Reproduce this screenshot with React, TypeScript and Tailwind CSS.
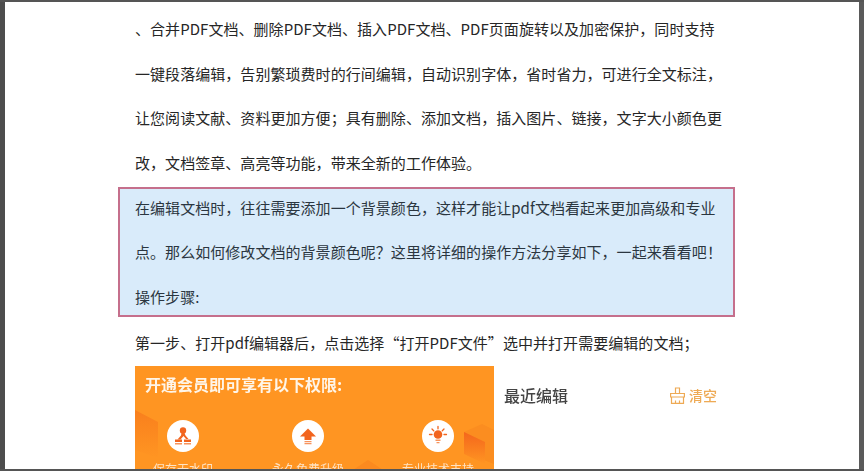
const cjk = { fontFamily: '"Noto Sans CJK SC", "Noto Sans", sans-serif' }

const paragraphOne = [
  '、合并PDF文档、删除PDF文档、插入PDF文档、PDF页面旋转以及加密保护，同时支持',
  '一键段落编辑，告别繁琐费时的行间编辑，自动识别字体，省时省力，可进行全文标注，',
  '让您阅读文献、资料更加方便；具有删除、添加文档，插入图片、链接，文字大小颜色更',
  '改，文档签章、高亮等功能，带来全新的工作体验。',
]

const selected = [
  '在编辑文档时，往往需要添加一个背景颜色，这样才能让pdf文档看起来更加高级和专业',
  '点。那么如何修改文档的背景颜色呢？这里将详细的操作方法分享如下，一起来看看吧！',
  '操作步骤:',
]

function Line({ text }: { text: string }) {
  return <p className="h-[44.7px] whitespace-nowrap leading-[44.7px] tracking-[0.05px]">{text}</p>
}

function StampIcon() {
  return (
    <svg viewBox="0 0 32 32" className="h-8 w-8">
      <circle cx="16" cy="16" r="16" fill="#fff" />
      <circle cx="16" cy="10.500" r="3.200" fill="#f2641e" />
      <path d="M14.500 13h3l1 2.500 3 3.500h-2.500l-2.500-3-3 3.500h-3l3.500-4z" fill="#f2641e" />
      <path d="M8 19.500h7v2.500H8zM17 19.500h7v2.500h-7z" fill="#f2641e" />
      <path d="M8 23h7v1.500H8zM17 23h7v1.500h-7z" fill="#f8935c" />
    </svg>
  )
}

function ArrowIcon() {
  return (
    <svg viewBox="0 0 32 32" className="h-8 w-8">
      <circle cx="16" cy="16" r="16" fill="#fff" />
      <path d="M16 8.500l8 8h-4.500v3.500h-7v-3.500H8z" fill="#f2641e" />
      <path d="M12.500 21h7v1.300h-7zM12.500 23h7v1.300h-7z" fill="#f8935c" />
    </svg>
  )
}

function BulbIcon() {
  return (
    <svg viewBox="0 0 32 32" className="h-8 w-8">
      <circle cx="16" cy="16" r="16" fill="#fff" />
      <circle cx="16" cy="14.500" r="4.300" fill="#f2641e" />
      <path d="M13.500 19.500h5v1.500h-5zM14.500 22h3v1.300h-3z" fill="#f8935c" />
      <path
        d="M16 6.500v2.300M10 9l1.700 1.700M22 9l-1.700 1.700M7.500 14.500h2.500M22 14.500h2.500"
        stroke="#f2641e"
        strokeWidth="1.300"
        strokeLinecap="round"
      />
    </svg>
  )
}

function BroomIcon() {
  return (
    <svg viewBox="0 0 15 17" className="h-[17px] w-[15px]" fill="none" stroke="#eeaa55" strokeWidth="1.200">
      <path d="M5.500 6.500V1h4v5.500" />
      <path d="M0.600 6.500h13.800v3.500H0.600z" />
      <path d="M1.500 10v6.400h12V10" />
      <path d="M5.500 16.400v-3M9.500 16.400v-3" />
    </svg>
  )
}

function Perk({ icon, label, className }: { icon: React.ReactNode; label: string; className?: string }) {
  return (
    <div className={`flex w-[90px] flex-col items-center gap-[8px] ${className ?? ''}`}>
      {icon}
      <span className="whitespace-nowrap text-[12px] leading-[18px] text-[#ffe3c4]">{label}</span>
    </div>
  )
}

function Banner() {
  return (
    <div className="relative h-[140px] w-[359px] shrink-0 bg-[#ff9522] blur-[0.5px]">
      <svg viewBox="0 0 359 140" className="absolute inset-0 h-full w-full">
        <defs>
          <linearGradient id="fadeLeft" x1="0" y1="0" x2="0" y2="1">
            <stop offset="0" stopColor="#f97f1d" />
            <stop offset="1" stopColor="#ff9522" />
          </linearGradient>
          <linearGradient id="fadeRight" x1="0" y1="0" x2="0" y2="1">
            <stop offset="0" stopColor="#f4661c" />
            <stop offset="1" stopColor="#ff9522" />
          </linearGradient>
        </defs>
        <path d="M0 44l23 12v36L0 84z" fill="url(#fadeLeft)" />
        <path d="M329 66l18-8 12 6v34l-10-4z" fill="#fb8d20" />
        <path d="M329 66l21 10v22l-21-10z" fill="url(#fadeRight)" />
        <path d="M218 104l15-10 15 10z" fill="#fb8a1f" />
      </svg>
      <div className="relative flex flex-col">
        <p className="px-[10px] pt-[8px] text-[16px] font-bold leading-[20px] text-[#fff5e8]">
          开通会员即可享有以下权限:
        </p>
        <div className="mt-[26px] flex pl-[3px]">
          <Perk icon={<StampIcon />} label="保存无水印" />
          <Perk icon={<ArrowIcon />} label="永久免费升级" className="ml-[35px]" />
          <Perk icon={<BulbIcon />} label="专业技术支持" className="ml-[40px]" />
        </div>
      </div>
    </div>
  )
}

export default function App() {
  return (
    <div
      className="flex h-[471px] w-[864px] flex-col overflow-hidden border-t-[2px] border-b-[2px] border-[#555555] bg-white text-[15px] text-[#262626]"
      style={cjk}
    >
      <div className="flex min-h-0 flex-1">
        <div className="w-[5px] shrink-0 bg-[#4d4d4d]" />
        <main className="min-w-0 flex-1 overflow-hidden pl-[113px] pt-[5px]">
          <div className="w-[617px]">
            <div className="px-[17px]">
              {paragraphOne.map((line) => (
                <Line key={line} text={line} />
              ))}
            </div>
            <div className="mt-[1px] h-[130px] border-[2px] border-[#c56f8c] bg-[#d9ebfa] px-[15px] text-[#2b3640]">
              <div className="-mt-[3px]">
                {selected.map((line) => (
                  <Line key={line} text={line} />
                ))}
              </div>
            </div>
            <div className="mt-[4px] px-[17px]">
              <Line text="第一步、打开pdf编辑器后，点击选择“打开PDF文件”选中并打开需要编辑的文档；" />
            </div>
            <div className="mt-[1px] flex pl-[17px]">
              <Banner />
              <div className="flex h-[40px] w-[223px] items-end justify-between pl-[10px] blur-[0.3px]">
                <span className="text-[16px] font-medium leading-[22px] text-[#444444]">最近编辑</span>
                <span className="flex h-[22px] items-center gap-[4px] text-[14px] font-medium leading-[20px] text-[#eeaa55]">
                  <BroomIcon />
                  清空
                </span>
              </div>
            </div>
          </div>
        </main>
        <div className="w-[5px] shrink-0 bg-[#5a5a5a]" />
      </div>
    </div>
  )
}
